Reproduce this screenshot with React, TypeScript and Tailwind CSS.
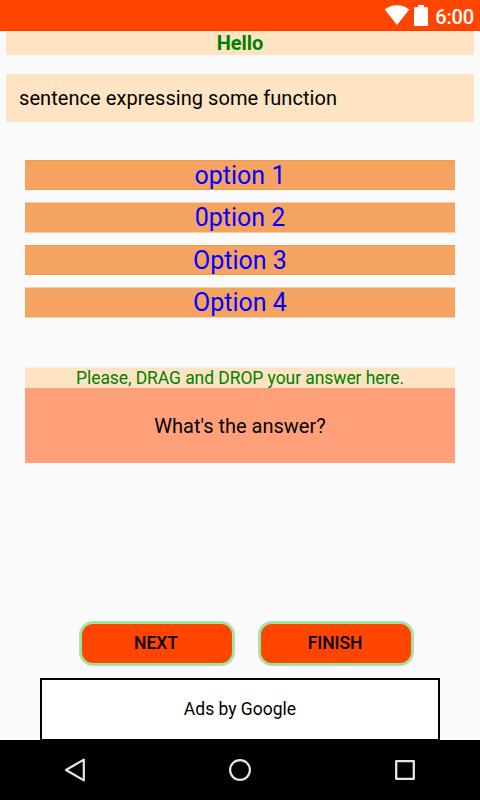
import React, { FC } from "react";
import clsx from "clsx";

type ButtonProps = {
  label: string;
  onClick?: () => void;
};

const options = ["option 1", "0ption 2", "Option 3", "Option 4"];

const StatusBar: FC = () => {
  return (
    <div className="flex h-[31px] shrink-0 items-start justify-end border-b border-[#ff3800] bg-[#ff4500] pr-[6px]">
      <svg width="26" height="20" viewBox="0 0 26 20" className="mt-[5px]" fill="#fff">
        <path d="M13 20L0.8 4.6C4 1.8 8.2 0.3 13 0.3s9 1.5 12.2 4.3z" />
      </svg>
      <svg width="14" height="21" viewBox="0 0 14 21" className="ml-[4px] mt-[5px]" fill="#fff">
        <path d="M4 0h6v2.2h3.2q.8 0 .8.8v17.2q0 .8-.8.8H.8q-.8 0-.8-.8V3q0-.8.8-.8H4z" />
      </svg>
      <span className="ml-[7px] mt-[5px] text-[20px] font-medium leading-[24px] tracking-[-0.15px] text-white">6:00</span>
    </div>
  );
};

const ActionButton: FC<ButtonProps> = ({ label, onClick }) => {
  return (
    <button
      onClick={onClick}
      className="h-[43px] w-[154px] rounded-[13px] border-[2.5px] border-[#90ee90] bg-[#ff4500] pr-[2px] text-[17.5px] font-medium leading-none tracking-[-0.05px] text-black shadow-[0_0_0_1px_rgba(0,0,0,0.18)]"
    >
      {label}
    </button>
  );
};

const NavigationBar: FC = () => {
  return (
    <div className="flex h-[60px] shrink-0 items-center justify-between bg-black px-[60px]">
      <svg width="30" height="30" viewBox="0 0 30 30" fill="none" stroke="#e6e6e6" strokeWidth="2.2" strokeLinejoin="round">
        <path d="M23.8 4.6v20.8L6 15z" />
      </svg>
      <svg width="30" height="30" viewBox="0 0 30 30" fill="none" stroke="#e6e6e6" strokeWidth="2.2">
        <circle cx="15" cy="15" r="9.9" />
      </svg>
      <svg width="30" height="30" viewBox="0 0 30 30" fill="none" stroke="#e6e6e6" strokeWidth="2.3" strokeLinejoin="round">
        <path d="M6.2 6.2h17.6v17.6H6.2z" />
      </svg>
    </div>
  );
};

const App: FC = () => {
  return (
    <div className="flex h-[800px] w-[480px] flex-col overflow-hidden bg-[#fafafa] font-['Roboto',sans-serif]">
      <StatusBar />

      <div className="flex flex-1 flex-col">
        <h1 className="mx-[6px] h-[24px] bg-[#ffe4c4] text-center text-[20px] font-bold leading-[24px] tracking-[-0.1px] text-[#008000]">
          Hello
        </h1>
        <p className="mx-[6px] mt-[19px] h-[48px] bg-[#ffe4c4] pl-[13px] text-[20px] leading-[48px] tracking-[0.06px] text-black">
          sentence expressing some function
        </p>

        <div className="mx-[25px] mt-[38px] flex flex-col gap-[12px]">
          {options.map((item, index) => (
            <div
              className={clsx(
                "border-y bg-[#f4a460] text-center text-[25px] text-[#0000ff]",
                index % 2 === 0
                  ? "h-[30px] border-[#f39b48] leading-[30px]"
                  : "h-[31px] border-[#f9cfad] leading-[29px]"
              )}
              key={item}
            >
              {item}
            </div>
          ))}
        </div>

        {/* drop target */}
        <div className="mx-[25px] mt-[49px]">
          <p className="h-[21px] border-t border-[#fdeedd] bg-[#ffe4c4] text-center text-[17.5px] leading-[20px] tracking-[-0.07px] text-[#008000]">
            Please, DRAG and DROP your answer here.
          </p>
          <div className="h-[75px] bg-[#ffa07a] text-center text-[20px] leading-[76px] text-black">
            What's the answer?
          </div>
        </div>

        <div className="mb-[13px] mt-auto flex gap-[25px] pl-[80px]">
          <ActionButton label="NEXT" />
          <ActionButton label="FINISH" />
        </div>
        <div className="mx-[40px] h-[62px] border-2 border-b border-black bg-white text-center text-[17.5px] leading-[58px] text-black">
          Ads by Google
        </div>
      </div>

      <NavigationBar />
    </div>
  );
};

export default App;
